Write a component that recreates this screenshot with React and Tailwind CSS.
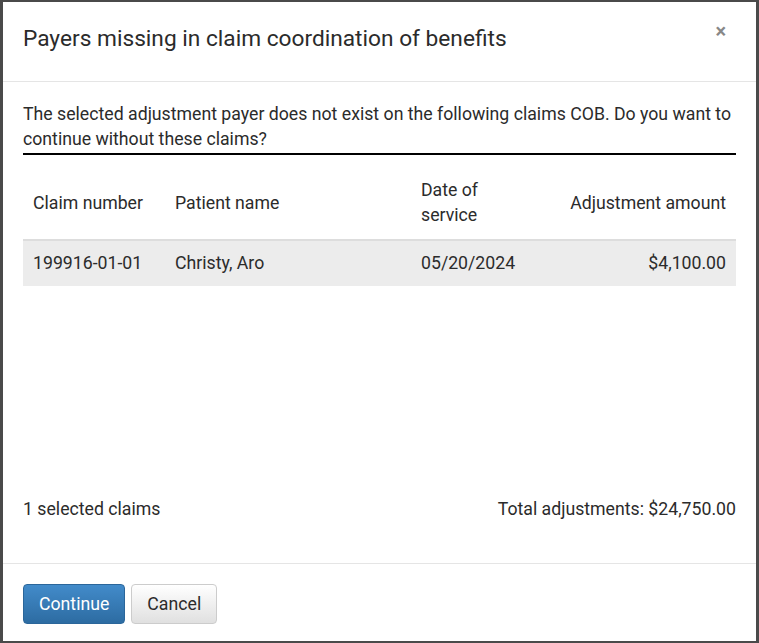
export default function App() {
  return (
    <div className="w-[759px] h-[643px] bg-white border-x-[3px] border-y-2 border-[#4a4a4a] flex flex-col text-[#2b2b2b] font-['Roboto',sans-serif]">
      {/* Header */}
      <div className="h-[80px] shrink-0 border-b border-[#e5e5e5] flex items-start justify-between pl-[20px] pr-[30px]">
        <h1 className="mt-[23px] text-[22.7px] leading-[28px]">Payers missing in claim coordination of benefits</h1>
        <button className="mt-[17px] text-[20px] leading-[24px] text-[#888] font-bold">×</button>
      </div>

      {/* Body */}
      <div className="flex-1 flex flex-col px-[20px] pt-[20px] text-[17.7px] leading-[25px]">
        <p className="pb-[1px] border-b-2 border-black">
          The selected adjustment payer does not exist on the following claims COB. Do you want to continue without these claims?
        </p>
        <table className="w-full">
          <thead>
            <tr className="border-b-2 border-[#dddddd]">
              <th className="font-normal text-left px-[10px] pt-[23px] pb-[11px] align-middle w-[142px]">Claim number</th>
              <th className="font-normal text-left px-[10px] pt-[23px] pb-[11px] align-middle w-[246px]">Patient name</th>
              <th className="font-normal text-left px-[10px] pt-[23px] pb-[11px] align-middle">Date of<br />service</th>
              <th className="font-normal text-right px-[10px] pt-[23px] pb-[11px] align-middle">Adjustment amount</th>
            </tr>
          </thead>
          <tbody>
            <tr className="bg-[#ececec]">
              <td className="px-[10px] py-[10px]">199916-01-01</td>
              <td className="px-[10px] py-[10px]">Christy, Aro</td>
              <td className="px-[10px] py-[10px]">05/20/2024</td>
              <td className="px-[10px] py-[10px] text-right">$4,100.00</td>
            </tr>
          </tbody>
        </table>
        <div className="mt-auto mb-[41px] flex justify-between">
          <span>1 selected claims</span>
          <span>Total adjustments: $24,750.00</span>
        </div>
      </div>

      {/* Footer */}
      <div className="h-[78px] shrink-0 border-t border-[#e5e5e5] flex items-start gap-[6px] px-[20px] pt-[20px]">
        <button className="h-[40px] px-[15px] rounded-[4px] border border-[#2b669a] bg-gradient-to-b from-[#428bca] to-[#2d6ca2] text-white text-[17.7px]">Continue</button>
        <button className="h-[40px] px-[15px] rounded-[4px] border border-[#cccccc] bg-gradient-to-b from-white to-[#e0e0e0] text-[#2b2b2b] text-[17.7px]">Cancel</button>
      </div>
    </div>
  );
}
